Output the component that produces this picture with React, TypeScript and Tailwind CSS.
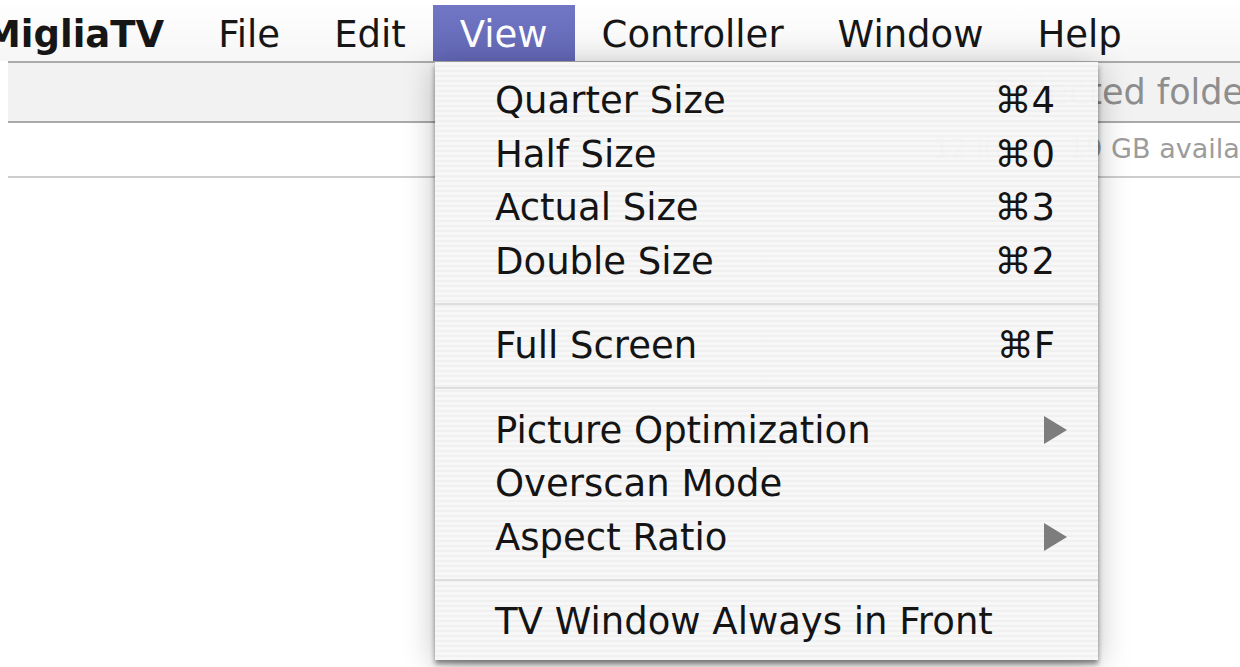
import React from "react";

type Item =
  | { kind: "item"; label: string; shortcut?: string; submenu?: boolean }
  | { kind: "sep" };

const menuBar = ["File", "Edit", "View", "Controller", "Window", "Help"];

const viewItems: Item[] = [
  { kind: "item", label: "Quarter Size", shortcut: "⌘4" },
  { kind: "item", label: "Half Size", shortcut: "⌘0" },
  { kind: "item", label: "Actual Size", shortcut: "⌘3" },
  { kind: "item", label: "Double Size", shortcut: "⌘2" },
  { kind: "sep" },
  { kind: "item", label: "Full Screen", shortcut: "⌘F" },
  { kind: "sep" },
  { kind: "item", label: "Picture Optimization", submenu: true },
  { kind: "item", label: "Overscan Mode" },
  { kind: "item", label: "Aspect Ratio", submenu: true },
  { kind: "sep" },
  { kind: "item", label: "TV Window Always in Front" },
];

function SubArrow() {
  return (
    <svg width="24" height="28" viewBox="0 0 24 28" className="shrink-0">
      <polygon points="1,0 24,14 1,28" fill="#7d7d7d" />
    </svg>
  );
}

function ViewMenu() {
  return (
    <div className="absolute left-[435px] top-[62px] w-[663px] h-[598px] py-[12px] bg-[repeating-linear-gradient(180deg,rgba(247,247,247,0.975)_0px,rgba(247,247,247,0.975)_3px,rgba(240,240,240,0.975)_3px,rgba(240,240,240,0.975)_5px)] shadow-[0_4px_5px_rgba(0,0,0,0.45),0_4px_30px_rgba(0,0,0,0.25)]">
      {viewItems.map((it, i) =>
        it.kind === "sep" ? (
          <div key={i} className="h-[31px] flex items-center">
            <div className="h-[2px] w-full bg-[#dedede]" />
          </div>
        ) : (
          <div
            key={i}
            className={
              "h-[53.5px] flex items-center justify-between pl-[60px] text-[37px] text-[#141414] " +
              (it.submenu ? "pr-[31px]" : "pr-[43px]")
            }
          >
            <span>{it.label}</span>
            {it.shortcut && <span>{it.shortcut}</span>}
            {it.submenu && <SubArrow />}
          </div>
        )
      )}
    </div>
  );
}

export default function App() {
  return (
    <div className="relative w-[1240px] h-[667px] overflow-hidden bg-white font-['DejaVu_Sans',sans-serif]">
      {/* menu bar */}
      <div className="h-[61px] flex items-start bg-gradient-to-b from-[#ffffff] to-[#f6f6f6] text-[37px] text-[#161616] whitespace-nowrap">
        <div className="ml-[-43px] mt-[5px] h-[56px] px-[27px] pt-[3px] flex items-center font-bold">
          MigliaTV
        </div>
        {menuBar.map((m) => (
          <div
            key={m}
            className={
              "mt-[5px] h-[56px] px-[27px] pt-[3px] flex items-center " +
              (m === "View" ? "bg-gradient-to-b from-[#7177c4] to-[#6367b6] text-white" : "")
            }
          >
            {m}
          </div>
        ))}
      </div>

      {/* window behind the menu */}
      <div className="ml-[8px] whitespace-nowrap">
        <div className="h-[62px] border-t-2 border-b-2 border-t-[#ababab] border-b-[#a9a9a9] bg-[#f2f2f2] flex items-center pl-[986px] text-[35px] text-[#8e8e8e]">
          Selected folder
        </div>
        <div className="h-[55px] border-b-2 border-[#cdcdcd] flex items-center pl-[925px] text-[27px] text-[#9c9c9c]">
          12 items, 19 GB available
        </div>
      </div>

      <ViewMenu />
    </div>
  );
}
